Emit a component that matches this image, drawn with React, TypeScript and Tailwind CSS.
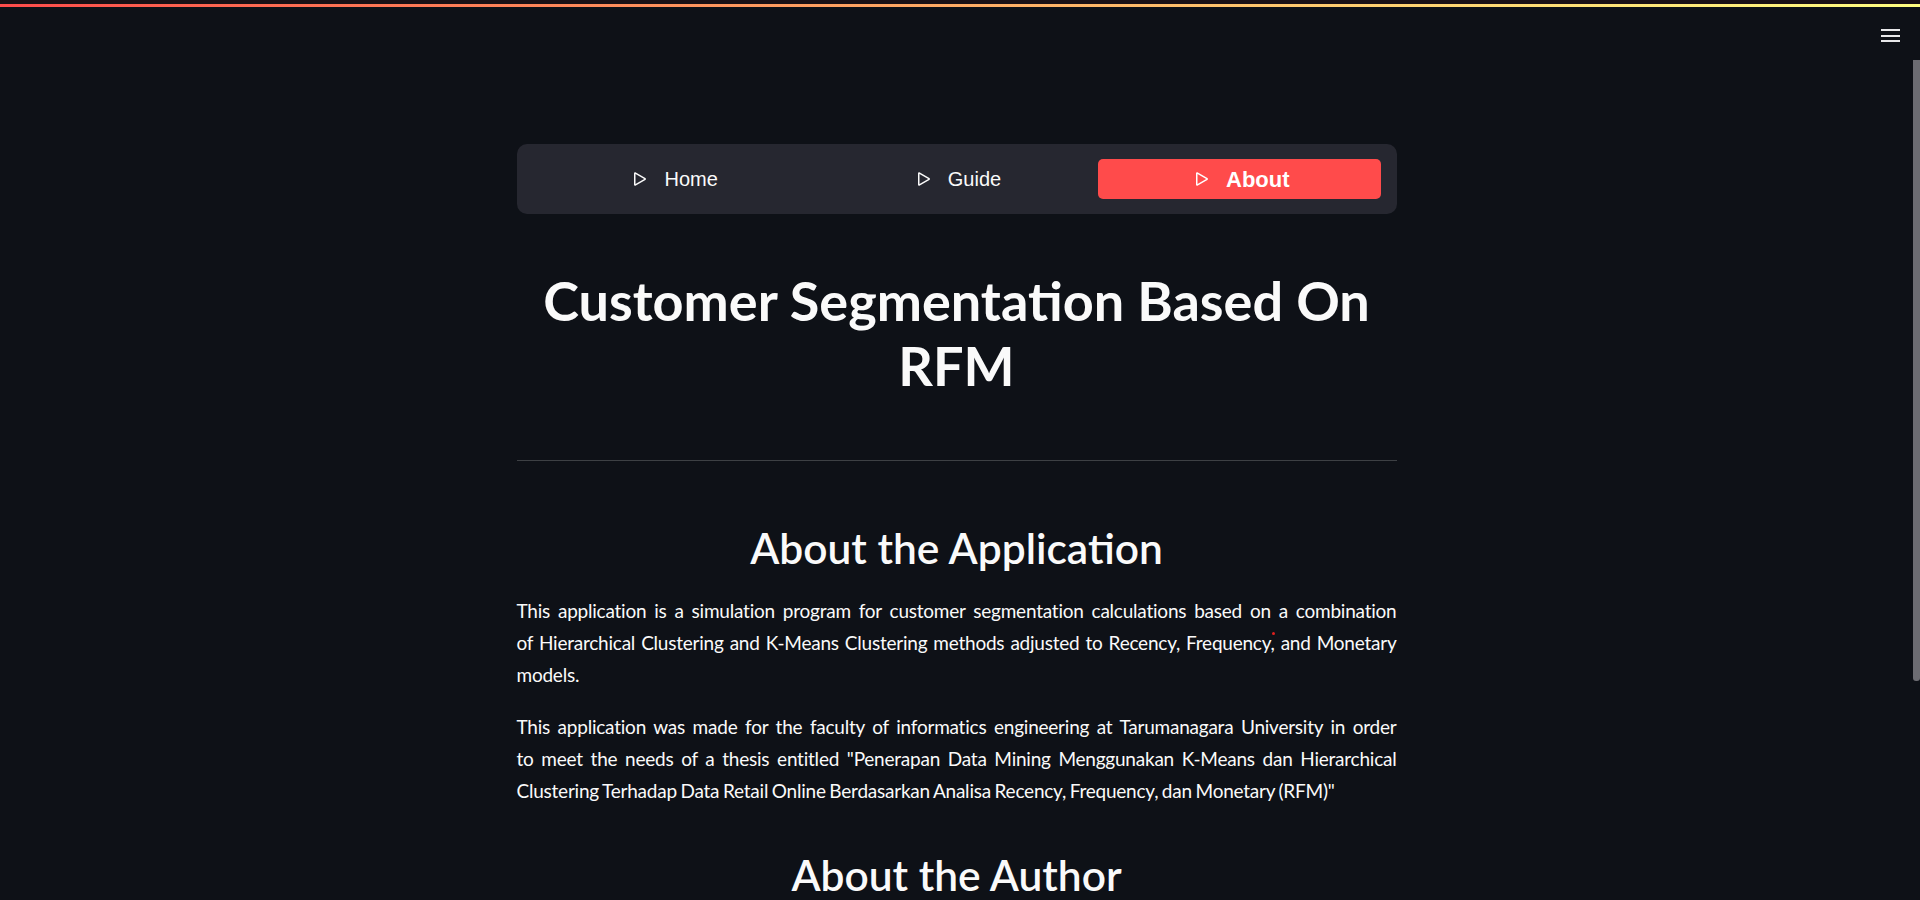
import { useState } from 'react'

const PlayIcon = () => (
  <svg width="24" height="24" viewBox="0 0 16 16" fill="currentColor" className="shrink-0">
    <path d="M10.804 8 5 4.633v6.734zm.792-.696a.802.802 0 0 1 0 1.392l-6.363 3.692C4.713 12.69 4 12.345 4 11.692V4.308c0-.653.713-.998 1.233-.696z" />
  </svg>
)

const pages = ['Home', 'Guide', 'About']

// each row of a justified paragraph, the last one stays left
const Lines = ({ lines }: { lines: string[] }) => (
  <>
    {lines.map((line, i) => (
      <span
        key={i}
        className={i < lines.length - 1 ? 'block whitespace-nowrap text-justify [text-align-last:justify]' : 'block whitespace-nowrap text-left'}
      >
        {line}
      </span>
    ))}
  </>
)

const App = () => {
  const [active, setActive] = useState('About')

  return (
    <div className="relative h-screen overflow-hidden bg-[#0e1117] flex flex-col text-[#fafafa] font-[Lato,'Noto_Sans',sans-serif]">
      <div className="h-[4px] bg-[#1a1116]" />
      <div className="h-[3px] bg-linear-to-r from-[#ff4b4b] to-[#fffd80]" />

      <button className="absolute right-[20px] top-[29px] flex flex-col gap-[3.5px] w-[19px]">
        <span className="block h-[2px] w-full bg-[#e8e8ea]" />
        <span className="block h-[2px] w-full bg-[#e8e8ea]" />
        <span className="block h-[2px] w-full bg-[#e8e8ea]" />
      </button>

      <div className="flex flex-1 min-h-0">
        <main className="flex-1 flex justify-center">
          <div className="w-[880px] pt-[137px]">
            <nav className="flex p-[15px] bg-[#262730] rounded-[10px] font-['Liberation_Sans',Arial,sans-serif]">
              {pages.map((page) => (
                <button
                  key={page}
                  onClick={() => setActive(page)}
                  className={
                    active === page
                      ? 'flex-1 h-[40px] flex items-center justify-center gap-[12px] rounded-[5px] bg-[#ff4b4b] text-white text-[22px] font-bold'
                      : 'flex-1 h-[40px] flex items-center justify-center gap-[12px] rounded-[5px] text-[#fafafa] text-[20px]'
                  }
                >
                  <PlayIcon />
                  <span>{page}</span>
                </button>
              ))}
            </nav>

            <h1 className="mt-[54px] text-center text-[54px] leading-[65px] font-bold">
              Customer Segmentation Based On
              <br />
              RFM
            </h1>

            <hr className="mt-[62px] h-px border-0 bg-[#3d4044]" />

            <h2 className="mt-[62px] text-center text-[42.5px] leading-[50px] font-semibold">About the Application</h2>

            <p className="mt-[22px] text-[19px] leading-[32px] tracking-[-0.012em] [word-spacing:-1px]">
              <Lines
                lines={[
                  'This application is a simulation program for customer segmentation calculations based on a combination',
                  'of Hierarchical Clustering and K-Means Clustering methods adjusted to Recency, Frequency, and Monetary',
                  'models.',
                ]}
              />
            </p>

            <p className="mt-[20px] text-[19px] leading-[32px] tracking-[-0.012em] [word-spacing:-1px]">
              <Lines
                lines={[
                  'This application was made for the faculty of informatics engineering at Tarumanagara University in order',
                  'to meet the needs of a thesis entitled "Penerapan Data Mining Menggunakan K-Means dan Hierarchical',
                  'Clustering Terhadap Data Retail Online Berdasarkan Analisa Recency, Frequency, dan Monetary (RFM)"',
                ]}
              />
            </p>

            <h2 className="mt-[43px] text-center text-[42.5px] leading-[50px] font-semibold">About the Author</h2>
          </div>
        </main>

        <div className="w-[7px] pt-[53px]">
          <div className="h-[621px] bg-[#6c6c72] rounded-b-[3px]" />
        </div>
      </div>

      <span className="absolute left-[1272px] top-[632px] w-[3px] h-[3px] rounded-full bg-[#e0201e]" />
    </div>
  )
}

export default App
